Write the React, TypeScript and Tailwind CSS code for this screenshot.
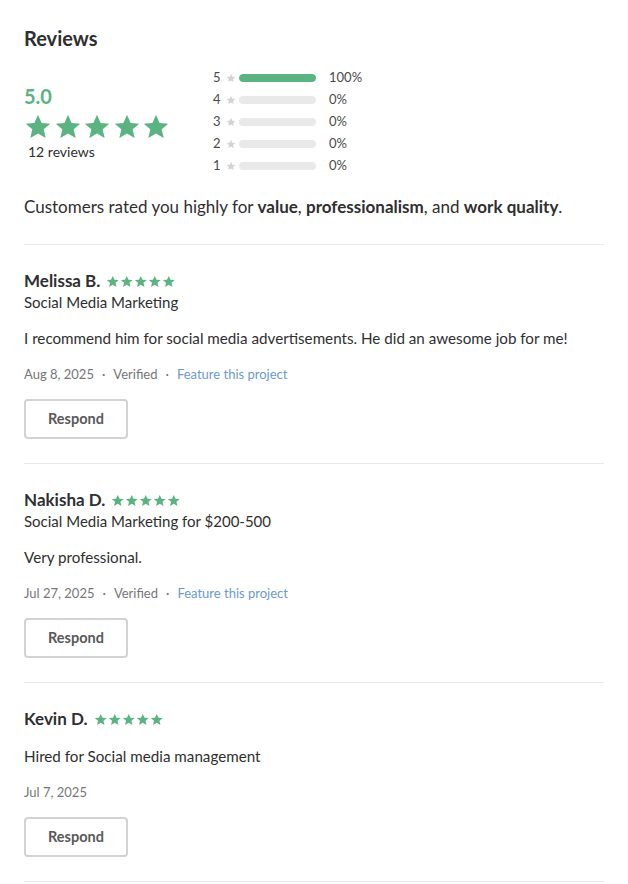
import React from 'react';

const STAR = 'M12 1.5l3.09 6.9 7.41.64-5.62 4.9 1.68 7.31L12 17.4l-6.56 3.85 1.68-7.31L1.5 9.04l7.41-.64L12 1.5z';

const Star: React.FC<{ className?: string }> = ({ className }) => (
  <svg viewBox="0 0 24 23" className={className} fill="currentColor">
    <path d={STAR} />
  </svg>
);

const Stars: React.FC<{ size: string; gap: string }> = ({ size, gap }) => (
  <div className={`flex ${gap} text-[#5bb381]`}>
    {[0, 1, 2, 3, 4].map((i) => (
      <Star key={i} className={size} />
    ))}
  </div>
);

const histogram = [
  { n: 5, pct: 100 },
  { n: 4, pct: 0 },
  { n: 3, pct: 0 },
  { n: 2, pct: 0 },
  { n: 1, pct: 0 },
];

interface Review {
  name: string;
  service?: string;
  body: string;
  date: string;
  verified: boolean;
}

const reviews: Review[] = [
  {
    name: 'Melissa B.',
    service: 'Social Media Marketing',
    body: 'I recommend him for social media advertisements. He did an awesome job for me!',
    date: 'Aug 8, 2025',
    verified: true,
  },
  {
    name: 'Nakisha D.',
    service: 'Social Media Marketing for $200-500',
    body: 'Very professional.',
    date: 'Jul 27, 2025',
    verified: true,
  },
  {
    name: 'Kevin D.',
    body: 'Hired for Social media management',
    date: 'Jul 7, 2025',
    verified: false,
  },
];

const ReviewItem: React.FC<{ r: Review }> = ({ r }) => (
  <div className="border-t border-[#e9e9e9] pt-[25px] pb-[24px]">
    <div className="flex items-center gap-[6px] h-[22px]">
      <span className="text-[17px] font-bold text-[#2f2f2f]">{r.name}</span>
      <div className="flex gap-[0.5px] text-[#5bb381]">
        {[0, 1, 2, 3, 4].map((i) => (
          <Star key={i} className="w-[13.5px] h-[13px]" />
        ))}
      </div>
    </div>
    {r.service && (
      <div className="text-[15px] text-[#2f2f2f] leading-[20px]">{r.service}</div>
    )}
    <div className="text-[15.2px] text-[#2f2f2f] leading-[20px] mt-[16px]">{r.body}</div>
    <div className="flex items-center text-[13px] text-[#767676] mt-[17px] h-[20px]">
      <span>{r.date}</span>
      {r.verified && (
        <>
          <span className="mx-[8px]">·</span>
          <span>Verified</span>
          <span className="mx-[8px]">·</span>
          <span className="text-[#6b9ad0]">Feature this project</span>
        </>
      )}
    </div>
    <button className="mt-[14px] w-[104px] h-[40px] border-2 border-[#d3d3d3] rounded-[4px] text-[14.5px] font-bold text-[#595959] bg-white">
      Respond
    </button>
  </div>
);

export default function App() {
  return (
    <div className="bg-white min-h-screen px-[24px] pt-[26px]" style={{ fontFamily: 'Lato, "Open Sans", sans-serif' }}>
      <div className="w-[580px]">
        <h2 className="text-[20px] font-bold text-[#2f2f2f] leading-[24px]">Reviews</h2>
        <div className="flex mt-[17px]">
          <div className="w-[189px] pt-[17px]">
            <div className="text-[20px] font-bold text-[#5bb381] leading-[24px]">5.0</div>
            <div className="mt-[5px]">
              <Stars size="w-[28px] h-[27px]" gap="gap-[1.5px]" />
            </div>
            <div className="text-[14px] text-[#2f2f2f] ml-[4px] leading-[18px] mt-[3px]">12 reviews</div>
          </div>
          <div className="flex flex-col">
            {histogram.map((h) => (
              <div key={h.n} className="flex items-center h-[22px] text-[13px] text-[#4a4a4a]">
                <span className="w-[10px]">{h.n}</span>
                <Star className="w-[10px] h-[10px] text-[#d3d3d3] ml-[3px]" />
                <div className="ml-[3px] w-[77px] h-[8px] rounded-full bg-[#e9e9e9] overflow-hidden">
                  <div className="h-full rounded-full bg-[#5bb381]" style={{ width: `${h.pct}%` }} />
                </div>
                <span className="ml-[13px]">{h.pct}%</span>
              </div>
            ))}
          </div>
        </div>
        <p className="text-[17px] text-[#2f2f2f] mt-[19px] mb-[26px] leading-[22px]">
          Customers rated you highly for <b>value</b>, <b>professionalism</b>, and <b>work quality</b>.
        </p>
        {reviews.map((r) => (
          <ReviewItem key={r.name} r={r} />
        ))}
        <div className="border-t border-[#e9e9e9]" />
      </div>
    </div>
  );
}
